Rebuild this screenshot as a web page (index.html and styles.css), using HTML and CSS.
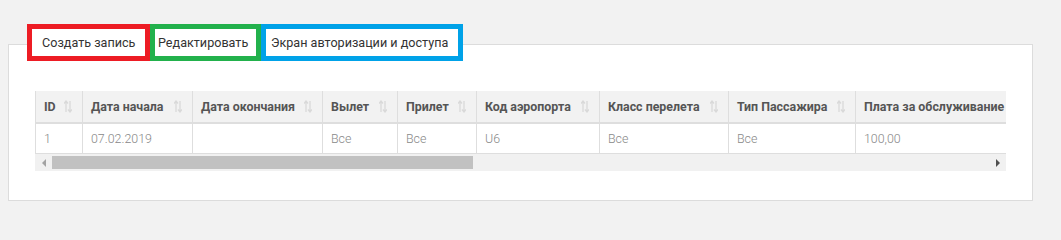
FILE: index.html
```html
<!DOCTYPE html>
<html lang="ru">
<head>
<meta charset="utf-8">
<link rel="stylesheet" href="styles.css">
</head>
<body>
<div class="page">
  <div class="tabs">
    <div class="tab tab-red">Создать запись</div>
    <div class="tab tab-green">Редактировать</div>
    <div class="tab tab-blue">Экран авторизации и доступа</div>
  </div>
  <div class="panel">
    <div class="grid-wrap">
      <table class="grid">
        <colgroup>
          <col class="c1"><col class="c2"><col class="c3"><col class="c4"><col class="c5"><col class="c6"><col class="c7"><col class="c8"><col class="c9">
        </colgroup>
        <thead>
          <tr>
            <th><span class="th-in">ID<svg class="sort" viewBox="0 0 8 13"><path d="M2 1 L2 12 M0 3.5 L2 1 L4 3.5 M6 1 L6 12 M4 9.5 L6 12 L8 9.5"/></svg></span></th>
            <th><span class="th-in">Дата начала<svg class="sort" viewBox="0 0 8 13"><path d="M2 1 L2 12 M0 3.5 L2 1 L4 3.5 M6 1 L6 12 M4 9.5 L6 12 L8 9.5"/></svg></span></th>
            <th><span class="th-in">Дата окончания<svg class="sort" viewBox="0 0 8 13"><path d="M2 1 L2 12 M0 3.5 L2 1 L4 3.5 M6 1 L6 12 M4 9.5 L6 12 L8 9.5"/></svg></span></th>
            <th><span class="th-in">Вылет<svg class="sort" viewBox="0 0 8 13"><path d="M2 1 L2 12 M0 3.5 L2 1 L4 3.5 M6 1 L6 12 M4 9.5 L6 12 L8 9.5"/></svg></span></th>
            <th><span class="th-in">Прилет<svg class="sort" viewBox="0 0 8 13"><path d="M2 1 L2 12 M0 3.5 L2 1 L4 3.5 M6 1 L6 12 M4 9.5 L6 12 L8 9.5"/></svg></span></th>
            <th><span class="th-in">Код аэропорта<svg class="sort" viewBox="0 0 8 13"><path d="M2 1 L2 12 M0 3.5 L2 1 L4 3.5 M6 1 L6 12 M4 9.5 L6 12 L8 9.5"/></svg></span></th>
            <th><span class="th-in">Класс перелета<svg class="sort" viewBox="0 0 8 13"><path d="M2 1 L2 12 M0 3.5 L2 1 L4 3.5 M6 1 L6 12 M4 9.5 L6 12 L8 9.5"/></svg></span></th>
            <th><span class="th-in">Тип Пассажира<svg class="sort" viewBox="0 0 8 13"><path d="M2 1 L2 12 M0 3.5 L2 1 L4 3.5 M6 1 L6 12 M4 9.5 L6 12 L8 9.5"/></svg></span></th>
            <th><span class="th-in">Плата за обслуживание<svg class="sort" viewBox="0 0 8 13"><path d="M2 1 L2 12 M0 3.5 L2 1 L4 3.5 M6 1 L6 12 M4 9.5 L6 12 L8 9.5"/></svg></span></th>
          </tr>
        </thead>
        <tbody>
          <tr>
            <td>1</td>
            <td>07.02.2019</td>
            <td></td>
            <td>Все</td>
            <td>Все</td>
            <td>U6</td>
            <td>Все</td>
            <td>Все</td>
            <td>100,00</td>
          </tr>
        </tbody>
      </table>
    </div>
    <div class="hscroll">
      <span class="arrow arrow-left"></span>
      <div class="track"><div class="thumb"></div></div>
      <span class="arrow arrow-right"></span>
    </div>
  </div>
</div>
</body>
</html>
```

FILE: styles.css
```css
html, body {
  margin: 0;
  padding: 0;
}
body {
  background: #f2f2f2;
  font-family: Roboto, "Liberation Sans", Arial, sans-serif;
  width: 1061px;
  height: 217px;
  overflow: hidden;
}
.page {
  padding: 24px 28px 0 8px;
}
.tabs {
  display: flex;
  margin-left: 19px;
  position: relative;
  z-index: 1;
}
.tab {
  box-sizing: border-box;
  background: #fff;
  border: 5px solid;
  height: 37px;
  line-height: 27px;
  font-size: 12.6px;
  color: #333;
  white-space: nowrap;
}
.tab-red {
  border-color: #ed1c24;
  width: 123px;
  padding-left: 10px;
}
.tab-green {
  border-color: #22b14c;
  width: 111px;
  padding-left: 3px;
}
.tab-blue {
  border-color: #00a2e8;
  width: 202px;
  padding-left: 5px;
}
.panel {
  margin-top: -17px;
  background: #fff;
  border: 1px solid #dcdcdc;
  padding: 46px 27px 29px 26px;
}
.grid-wrap {
  overflow: hidden;
  width: 971px;
}
.grid {
  border-collapse: separate;
  border-spacing: 0;
  table-layout: fixed;
  width: 1020px;
  font-size: 12px;
}
.c1 { width: 47px; }
.c2 { width: 110px; }
.c3 { width: 130px; }
.c4 { width: 75px; }
.c5 { width: 79px; }
.c6 { width: 123px; }
.c7 { width: 129px; }
.c8 { width: 127px; }
.c9 { width: 200px; }
.grid th {
  background: #f2f2f2;
  color: #555;
  font-weight: 700;
  font-size: 12.4px;
  text-align: left;
  height: 33px;
  padding: 0 10px 0 8px;
  border-left: 1px solid #dedede;
  border-bottom: 2px solid #dedede;
  box-sizing: border-box;
  white-space: nowrap;
}
.th-in {
  display: flex;
  align-items: center;
  justify-content: space-between;
}
.sort {
  width: 8px;
  height: 13px;
  flex: none;
  fill: none;
  stroke: #d9d9d9;
  stroke-width: 1.3;
}
.grid td {
  color: #888;
  font-weight: 300;
  font-size: 12.4px;
  height: 30px;
  padding: 0 8px;
  border-left: 1px solid #dedede;
  border-bottom: 1px solid #dedede;
  box-sizing: border-box;
  white-space: nowrap;
}
.hscroll {
  display: flex;
  align-items: center;
  width: 971px;
  height: 17px;
  background: #f1f1f1;
}
.arrow {
  flex: none;
  width: 17px;
  height: 17px;
  display: flex;
  align-items: center;
  justify-content: center;
}
.arrow::before {
  content: "";
  width: 0;
  height: 0;
  border-top: 4px solid transparent;
  border-bottom: 4px solid transparent;
}
.arrow-left::before {
  border-right: 4px solid #a3a3a3;
}
.arrow-right::before {
  border-left: 4px solid #505050;
}
.track {
  flex: 1;
  height: 13px;
}
.thumb {
  width: 421px;
  height: 13px;
  background: #c1c1c1;
}
```
